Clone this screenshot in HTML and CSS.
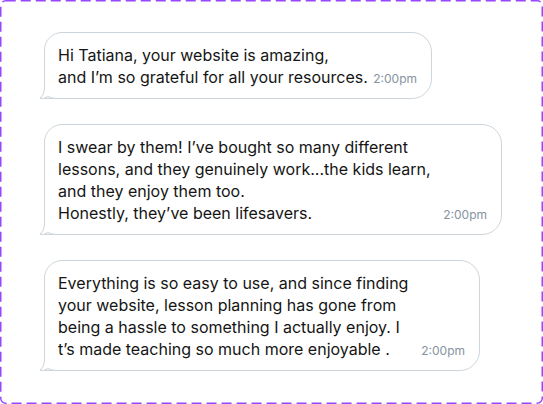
FILE: index.html
```html
<!DOCTYPE html>
<html>
<head>
<meta charset="utf-8">
<link rel="stylesheet" href="styles.css">
</head>
<body>
<div class="frame">
  <svg class="frame-border" width="543" height="404" viewBox="0 0 543 404"><rect x="0.75" y="0.75" width="541.5" height="402.5" rx="5" ry="5"/></svg>
  <div class="thread">
    <div class="bubble b1">
      <p class="text">Hi Tatiana, your website is amazing,<br>and I’m so grateful for all your resources.<span class="time">2:00pm</span></p>
      <svg class="tail" width="20" height="16" viewBox="0 0 20 16"><rect x="5" y="0" width="15" height="15" fill="#fff"/><path d="M5.5 0 V6 Q5.5 11 1 15.5 Q6 15.5 9 13.5 Q12 15.5 20 15.5"/></svg>
    </div>
    <div class="bubble b2">
      <p class="text">I swear by them! I’ve bought so many different<br>lessons, and they genuinely work...the kids learn,<br>and they enjoy them too.<br>Honestly, they’ve been lifesavers.<span class="time">2:00pm</span></p>
      <svg class="tail" width="20" height="16" viewBox="0 0 20 16"><rect x="5" y="0" width="15" height="15" fill="#fff"/><path d="M5.5 0 V6 Q5.5 11 1 15.5 Q6 15.5 9 13.5 Q12 15.5 20 15.5"/></svg>
    </div>
    <div class="bubble b3">
      <p class="text">Everything is so easy to use, and since finding<br>your website, lesson planning has gone from<br>being a hassle to something I actually enjoy. I<br>t’s made teaching so much more enjoyable .<span class="time">2:00pm</span></p>
      <svg class="tail" width="20" height="16" viewBox="0 0 20 16"><rect x="5" y="0" width="15" height="15" fill="#fff"/><path d="M5.5 0 V6 Q5.5 11 1 15.5 Q6 15.5 9 13.5 Q12 15.5 20 15.5"/></svg>
    </div>
  </div>
</div>
</body>
</html>
```

FILE: styles.css
```css
* { box-sizing: border-box; }
html, body { margin: 0; padding: 0; background: #fff; }
body { font-family: Inter, "Noto Sans", sans-serif; color: #151515; }
.frame {
  position: relative;
  width: 543px;
  height: 404px;
  padding: 32px 0 0 44px;
}
.frame-border {
  position: absolute;
  left: 0;
  top: 0;
  pointer-events: none;
}
.frame-border rect {
  fill: none;
  stroke: #9747ff;
  stroke-width: 1.5;
  stroke-dasharray: 10 5;
}
.thread {
  display: flex;
  flex-direction: column;
  align-items: flex-start;
  gap: 25px;
}
.bubble {
  position: relative;
  border: 1px solid #cdd5db;
  border-radius: 18px 20px 20px 0;
  padding: 11px 14px 10px 13px;
  background: #fff;
}
.b1 { width: 388px; }
.b2 { width: 458px; }
.b3 { width: 436px; }
.text {
  margin: 0;
  font-size: 16px;
  line-height: 22px;
  letter-spacing: 0;
}
.time {
  float: right;
  font-size: 12px;
  line-height: 19px;
  margin-top: 3px;
  color: #8593a0;
}
.tail {
  position: absolute;
  left: -6px;
  bottom: -1px;
}
.tail path {
  fill: #fff;
  stroke: #cdd5db;
  stroke-width: 1;
}
```
